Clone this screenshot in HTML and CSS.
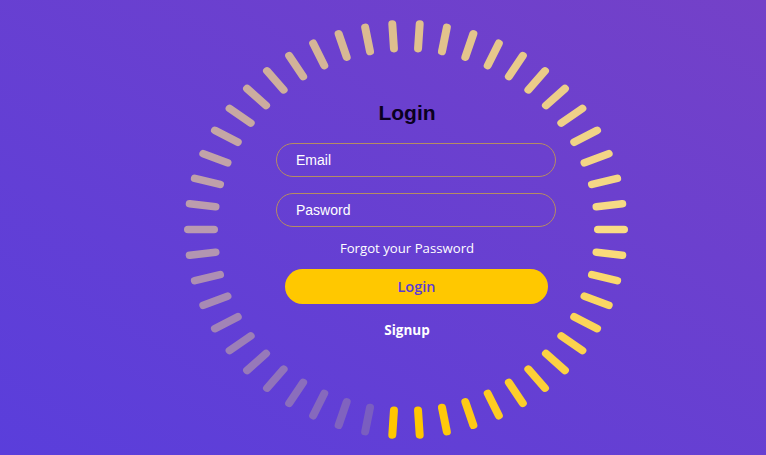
FILE: index.html
```html
<!DOCTYPE html>
<html lang="en">
<head>
<meta charset="utf-8">
<title>Login</title>
<link rel="stylesheet" href="styles.css">
</head>
<body>
<main class="stage">
  <svg class="ring" viewBox="0 0 766 455" width="766" height="455" aria-hidden="true">
    <g transform="translate(406 229.5) scale(1 0.944)" stroke-width="8" stroke-linecap="round">
      <line x1="192" y1="0" x2="218" y2="0" transform="rotate(93.6)" stroke="#ffc700"/>
      <line x1="192" y1="0" x2="218" y2="0" transform="rotate(86.4)" stroke="#ffc700"/>
      <line x1="192" y1="0" x2="218" y2="0" transform="rotate(79.2)" stroke="#ffc90b"/>
      <line x1="192" y1="0" x2="218" y2="0" transform="rotate(72)" stroke="#feca16"/>
      <line x1="192" y1="0" x2="218" y2="0" transform="rotate(64.8)" stroke="#fecc21"/>
      <line x1="192" y1="0" x2="218" y2="0" transform="rotate(57.6)" stroke="#fdce2c"/>
      <line x1="192" y1="0" x2="218" y2="0" transform="rotate(50.4)" stroke="#fdd037"/>
      <line x1="192" y1="0" x2="218" y2="0" transform="rotate(43.2)" stroke="#fcd242"/>
      <line x1="192" y1="0" x2="218" y2="0" transform="rotate(36)" stroke="#fcd34d"/>
      <line x1="192" y1="0" x2="218" y2="0" transform="rotate(28.8)" stroke="#fbd558"/>
      <line x1="192" y1="0" x2="218" y2="0" transform="rotate(21.6)" stroke="#fbd763"/>
      <line x1="192" y1="0" x2="218" y2="0" transform="rotate(14.4)" stroke="#fad96e"/>
      <line x1="192" y1="0" x2="218" y2="0" transform="rotate(7.2)" stroke="#fada79"/>
      <line x1="192" y1="0" x2="218" y2="0" transform="rotate(0)" stroke="#f9dc84"/>
      <line x1="192" y1="0" x2="218" y2="0" transform="rotate(-7.2)" stroke="#f7da85"/>
      <line x1="192" y1="0" x2="218" y2="0" transform="rotate(-14.4)" stroke="#f5d786"/>
      <line x1="192" y1="0" x2="218" y2="0" transform="rotate(-21.6)" stroke="#f3d586"/>
      <line x1="192" y1="0" x2="218" y2="0" transform="rotate(-28.8)" stroke="#f1d387"/>
      <line x1="192" y1="0" x2="218" y2="0" transform="rotate(-36)" stroke="#efd088"/>
      <line x1="192" y1="0" x2="218" y2="0" transform="rotate(-43.2)" stroke="#ecce89"/>
      <line x1="192" y1="0" x2="218" y2="0" transform="rotate(-50.4)" stroke="#ebcc89"/>
      <line x1="192" y1="0" x2="218" y2="0" transform="rotate(-57.6)" stroke="#e9ca8a"/>
      <line x1="192" y1="0" x2="218" y2="0" transform="rotate(-64.8)" stroke="#e6c78b"/>
      <line x1="192" y1="0" x2="218" y2="0" transform="rotate(-72)" stroke="#e4c58c"/>
      <line x1="192" y1="0" x2="218" y2="0" transform="rotate(-79.2)" stroke="#e2c38c"/>
      <line x1="192" y1="0" x2="218" y2="0" transform="rotate(-86.4)" stroke="#e0c08d"/>
      <line x1="192" y1="0" x2="218" y2="0" transform="rotate(-93.6)" stroke="#debe8e"/>
      <line x1="192" y1="0" x2="218" y2="0" transform="rotate(-100.8)" stroke="#dbbb91"/>
      <line x1="192" y1="0" x2="218" y2="0" transform="rotate(-108)" stroke="#d8b894"/>
      <line x1="192" y1="0" x2="218" y2="0" transform="rotate(-115.2)" stroke="#d5b597"/>
      <line x1="192" y1="0" x2="218" y2="0" transform="rotate(-122.4)" stroke="#d2b299"/>
      <line x1="192" y1="0" x2="218" y2="0" transform="rotate(-129.6)" stroke="#cfaf9c"/>
      <line x1="192" y1="0" x2="218" y2="0" transform="rotate(-136.8)" stroke="#ccac9f"/>
      <line x1="192" y1="0" x2="218" y2="0" transform="rotate(-144)" stroke="#c8a9a2"/>
      <line x1="192" y1="0" x2="218" y2="0" transform="rotate(-151.2)" stroke="#c5a6a5"/>
      <line x1="192" y1="0" x2="218" y2="0" transform="rotate(-158.4)" stroke="#c2a3a8"/>
      <line x1="192" y1="0" x2="218" y2="0" transform="rotate(-165.6)" stroke="#bfa0aa"/>
      <line x1="192" y1="0" x2="218" y2="0" transform="rotate(-172.8)" stroke="#bc9dad"/>
      <line x1="192" y1="0" x2="218" y2="0" transform="rotate(-180)" stroke="#b99ab0"/>
      <line x1="192" y1="0" x2="218" y2="0" transform="rotate(-187.2)" stroke="#b395b1"/>
      <line x1="192" y1="0" x2="218" y2="0" transform="rotate(-194.4)" stroke="#ae8fb3"/>
      <line x1="192" y1="0" x2="218" y2="0" transform="rotate(-201.6)" stroke="#a88ab4"/>
      <line x1="192" y1="0" x2="218" y2="0" transform="rotate(-208.8)" stroke="#a284b6"/>
      <line x1="192" y1="0" x2="218" y2="0" transform="rotate(-216)" stroke="#9c7fb7"/>
      <line x1="192" y1="0" x2="218" y2="0" transform="rotate(-223.2)" stroke="#9779b9"/>
      <line x1="192" y1="0" x2="218" y2="0" transform="rotate(-230.4)" stroke="#9174ba"/>
      <line x1="192" y1="0" x2="218" y2="0" transform="rotate(-237.6)" stroke="#8b6ebc"/>
      <line x1="192" y1="0" x2="218" y2="0" transform="rotate(-244.8)" stroke="#8669bd"/>
      <line x1="192" y1="0" x2="218" y2="0" transform="rotate(-252)" stroke="#8063bf"/>
      <line x1="192" y1="0" x2="218" y2="0" transform="rotate(-259.2)" stroke="#7a5ec0"/>
    </g>
  </svg>
  <form class="login" onsubmit="return false">
    <h2 class="title">Login</h2>
    <input class="field" type="email" placeholder="Email">
    <input class="field field-pass" type="password" placeholder="Pasword">
    <a class="forgot" href="#">Forgot your Password</a>
    <button class="btn" type="submit">Login</button>
    <a class="signup" href="#">Signup</a>
  </form>
</main>
</body>
</html>
```
FILE: styles.css
```css
* { box-sizing: border-box; }
html, body { margin: 0; padding: 0; }
body {
  width: 766px;
  height: 455px;
  overflow: hidden;
  background: linear-gradient(to bottom left, #7441c8, #5a3edb);
  font-family: "Liberation Sans", Arial, sans-serif;
}
.stage {
  position: relative;
  width: 766px;
  height: 455px;
  display: flex;
  justify-content: center;
  padding-left: 48px;
  padding-top: 101px;
}
.ring {
  position: absolute;
  left: 0;
  top: 0;
}
.login {
  position: relative;
  width: 262px;
  display: flex;
  flex-direction: column;
  align-items: center;
}
.title {
  margin: 0;
  font-size: 21px;
  line-height: 24px;
  font-weight: 700;
  color: #0a0020;
}
.field {
  align-self: flex-start;
  width: 280px;
  height: 34px;
  margin-top: 18px;
  padding: 0 0 0 19px;
  border: 1px solid #b58c62;
  border-radius: 17px;
  background: transparent;
  color: #fff;
  font-family: "Liberation Sans", Arial, sans-serif;
  font-size: 14px;
  outline: none;
}
.field-pass { margin-top: 16px; }
.field::placeholder { color: #fff; opacity: 1; }
.forgot {
  margin-top: 11px;
  font-family: "Open Sans", sans-serif;
  font-size: 13.2px;
  line-height: 20px;
  color: #fff;
  text-decoration: none;
}
.btn {
  align-self: flex-start;
  margin: 11px 0 0 9px;
  width: 263px;
  height: 35px;
  border: 0;
  border-radius: 18px;
  background: #ffc800;
  color: #5a3cd6;
  font-family: "Open Sans", sans-serif;
  font-size: 14.5px;
  font-weight: 600;
  cursor: pointer;
}
.signup {
  margin-top: 16px;
  font-family: "Open Sans", sans-serif;
  font-size: 13.5px;
  font-weight: 700;
  line-height: 20px;
  color: #fff;
  text-decoration: none;
}
```
